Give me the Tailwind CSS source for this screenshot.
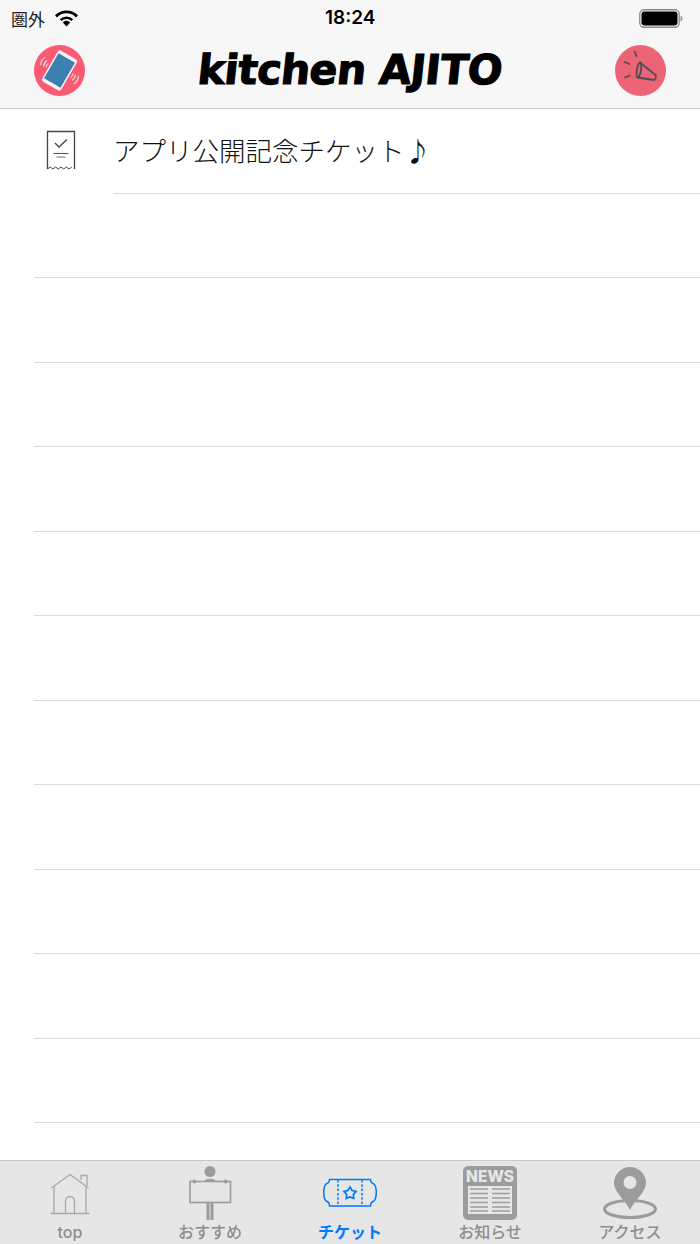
<!DOCTYPE html>
<html lang="ja">
<head>
<meta charset="utf-8">
<script src="https://cdn.jsdelivr.net/npm/@tailwindcss/browser@4"></script>
</head>
<body class="bg-white">
<div class="w-[700px] h-[1244px] flex flex-col overflow-hidden font-['Inter','Noto_Sans_CJK_JP',sans-serif] text-black">
  <header class="h-[109px] shrink-0 bg-[#f7f7f7] border-b border-[#cfcfcf] flex flex-col">
    <div class="h-[36px] shrink-0 relative flex items-center justify-between pl-[11px] pr-[17px]">
      <div class="flex items-center gap-[9px]">
        <span class="text-[17px] leading-none font-['Noto_Sans_CJK_JP',sans-serif] text-[#222]">圏外</span>
        <svg class="w-[25px] h-[18px]" viewBox="0 0 25 18"><path d="M12.5 17.5 L8.7 13.2 A5.5 5.5 0 0 1 16.3 13.2 Z" fill="#000"/><path d="M5.8 10.2 A9.7 9.7 0 0 1 19.2 10.2 L17.4 12 A7.2 7.2 0 0 0 7.6 12 Z" fill="#000"/><path d="M1 6.3 A16 16 0 0 1 24 6.3 L22 8.4 A13 13 0 0 0 3 8.4 Z" fill="#000"/></svg>
      </div>
      <span class="absolute left-[325px] top-[8px] text-[19px] leading-[20px] font-semibold">18:24</span>
      <svg class="w-[44px] h-[19px]" viewBox="0 0 44 19"><rect x="0.75" y="0.75" width="39.5" height="17.5" rx="4.5" fill="none" stroke="#8a8a8a" stroke-width="1.3"/><rect x="2.5" y="2.5" width="36" height="14" rx="3" fill="#000"/><path d="M41.5 6.5 C43 7 43.5 8 43.5 9.5 C43.5 11 43 12 41.5 12.5 Z" fill="#999"/></svg>
    </div>
    <nav class="flex-1 flex items-start justify-between pl-[34px] pr-[34px] pt-[9px]">
      <svg class="w-[51px] h-[51px]" viewBox="0 0 51 51">
        <circle cx="25.5" cy="25.5" r="25.5" fill="#fb5b72"/>
        <g transform="rotate(30 25.5 25.5)">
          <rect x="14.5" y="7.5" width="22" height="36" rx="3" fill="#f4f4f4"/>
          <rect x="16" y="11" width="19" height="29" fill="#3d7fb0"/>
        </g>
        <g fill="none" stroke="#f6d5d8" stroke-width="1.2">
          <path d="M6.5 20 A11 11 0 0 1 11 12"/><path d="M9.5 21.5 A8 8 0 0 1 13 15.5"/><path d="M12 22.5 A5 5 0 0 1 14.5 18.5"/>
          <path d="M44.5 31 A11 11 0 0 1 40 39"/><path d="M41.5 29.5 A8 8 0 0 1 38 35.5"/><path d="M39 28.5 A5 5 0 0 1 36.5 32.5"/>
        </g>
      </svg>
      <div class="w-[314px] h-[51px] flex items-center justify-center text-[41px] leading-none font-bold whitespace-nowrap font-['DejaVu_Sans',sans-serif] [-webkit-text-stroke:1.2px_black] tracking-[-0.5px] -skew-x-6">kitchen AJITO</div>
      <svg class="w-[51px] h-[51px]" viewBox="0 0 51 51">
        <circle cx="25.5" cy="25.5" r="25.5" fill="#ec6475"/>
        <g fill="none" stroke="#4f4f55" stroke-width="1.8" stroke-linecap="round" stroke-linejoin="round">
          <path d="M25 17.5 L40.5 30 C41.5 31 40.5 34.5 39 35 L22.5 32.5 C20.5 31.5 22 19 25 17.5 Z"/>
          <path d="M25 17.5 C27.5 19 26 31 22.5 32.5"/>
          <path d="M19.5 6.5 L21.5 11"/><path d="M9.5 17 L14.5 19"/><path d="M10 32.5 L14.5 30.5"/>
        </g>
      </svg>
    </nav>
  </header>

  <main class="flex-1 overflow-hidden">
    <div class="h-[84.5px] ml-[34px] relative flex items-start">
      <svg class="w-[30px] h-[42px] ml-[12px] mt-[21px] shrink-0" viewBox="0 0 30 42">
        <path d="M1.5 39 V1.5 H28.5 V39" fill="none" stroke="#444" stroke-width="1.3"/>
        <path d="M1.5 39 l2.7 -2 2.7 2 2.7 -2 2.7 2 2.7 -2 2.7 2 2.7 -2 2.7 2 2.7 -2" fill="none" stroke="#444" stroke-width="1"/>
        <path d="M9 13 L13 17 L21 9.5" fill="none" stroke="#444" stroke-width="1.3"/>
        <path d="M7.5 23.5 H22.5" stroke="#555" stroke-width="1.1"/><path d="M10.5 27 H19.5" stroke="#777" stroke-width="1.1"/>
      </svg>
      <div class="ml-[37px] flex-1 h-full border-b border-[#dcdcdc]">
        <p class="text-[26.5px] leading-[40px] mt-[21px] font-['Noto_Sans_CJK_JP',sans-serif] font-light text-[#111] whitespace-nowrap">アプリ公開記念チケット♪</p>
      </div>
    </div>
    <div class="h-[84.5px] ml-[34px] border-b border-[#dcdcdc]"></div>
    <div class="h-[84.5px] ml-[34px] border-b border-[#dcdcdc]"></div>
    <div class="h-[84.5px] ml-[34px] border-b border-[#dcdcdc]"></div>
    <div class="h-[84.5px] ml-[34px] border-b border-[#dcdcdc]"></div>
    <div class="h-[84.5px] ml-[34px] border-b border-[#dcdcdc]"></div>
    <div class="h-[84.5px] ml-[34px] border-b border-[#dcdcdc]"></div>
    <div class="h-[84.5px] ml-[34px] border-b border-[#dcdcdc]"></div>
    <div class="h-[84.5px] ml-[34px] border-b border-[#dcdcdc]"></div>
    <div class="h-[84.5px] ml-[34px] border-b border-[#dcdcdc]"></div>
    <div class="h-[84.5px] ml-[34px] border-b border-[#dcdcdc]"></div>
    <div class="h-[84.5px] ml-[34px] border-b border-[#dcdcdc]"></div>
  </main>

  <footer class="h-[84px] shrink-0 bg-[#e6e6e6] border-t border-[#c9c9c9] flex pt-[5px] text-[16px] font-medium text-[#8e8e8e] font-['Inter','Noto_Sans_CJK_JP',sans-serif]">
    <div class="flex-1 flex flex-col items-center">
      <svg class="w-[60px] h-[54px]" viewBox="0 0 60 54" fill="none" stroke="#a8a8a8" stroke-width="1.3">
        <path d="M11.5 22 L30 8.5 L48.5 22"/><path d="M41 14 V9.5 H47 V20"/><path d="M14 20 V47 M46 20 V47"/><path d="M10.5 47.5 H49.5"/><path d="M25.5 47 V35 A4.5 4.5 0 0 1 34.5 35 V47"/>
      </svg>
      <span class="leading-[22px] mt-[1px]">top</span>
    </div>
    <div class="flex-1 flex flex-col items-center">
      <svg class="w-[60px] h-[54px]" viewBox="0 0 60 54">
        <circle cx="30" cy="5.5" r="5.5" fill="#9c9c9c"/><path d="M24 16 C24 11.5 36 11.5 36 16 Z" fill="#9c9c9c"/>
        <rect x="26.5" y="37" width="3" height="17" fill="#9c9c9c"/><rect x="30.5" y="37" width="3" height="17" fill="#9c9c9c"/>
        <rect x="10" y="15.5" width="40.5" height="21" fill="#e6e6e6" stroke="#9c9c9c" stroke-width="1.6"/>
        <circle cx="14.5" cy="15.5" r="2" fill="#9c9c9c"/><circle cx="45.5" cy="15.5" r="2" fill="#9c9c9c"/>
      </svg>
      <span class="leading-[22px] mt-[1px]">おすすめ</span>
    </div>
    <div class="flex-1 flex flex-col items-center text-[#007aff] font-semibold">
      <svg class="w-[60px] h-[54px]" viewBox="0 0 60 54" fill="none" stroke="#007aff" stroke-width="1.5">
        <path d="M9.5 13.5 H50.5 C50.5 16.5 52.5 17.5 54 18 C57 21 57 32 54 35 C52.5 35.5 50.5 36.5 50.5 40 H9.5 C9.5 36.5 7.5 35.5 6 35 C3 32 3 21 6 18 C7.5 17.5 9.5 16.5 9.5 13.5 Z"/>
        <path d="M18 14 V40 M42 14 V40" stroke-dasharray="2.5 1.8"/>
        <path d="M30 21 L32.1 24.4 L36 25.4 L33.4 28.4 L33.7 32.4 L30 30.9 L26.3 32.4 L26.6 28.4 L24 25.4 L27.9 24.4 Z" stroke-width="1.7"/>
      </svg>
      <span class="leading-[22px] mt-[1px]">チケット</span>
    </div>
    <div class="flex-1 flex flex-col items-center">
      <svg class="w-[60px] h-[54px]" viewBox="0 0 60 54">
        <rect x="3" y="0" width="54" height="54" rx="5" fill="#9c9c9c"/>
        <rect x="8" y="20" width="44" height="28" fill="#e6e6e6"/>
        <path d="M10 23 H28 M10 27.5 H28 M10 32 H28 M10 36.5 H28 M10 41 H28 M10 45 H28 M32 23 H50 M32 27.5 H50 M32 32 H50 M32 36.5 H50 M32 41 H50 M32 45 H50" stroke="#9c9c9c" stroke-width="1.6"/>
        <text x="30" y="16" text-anchor="middle" font-family="Inter, sans-serif" font-weight="800" font-size="15.5" fill="#e6e6e6">NEWS</text>
      </svg>
      <span class="leading-[22px] mt-[1px]">お知らせ</span>
    </div>
    <div class="flex-1 flex flex-col items-center">
      <svg class="w-[60px] h-[54px]" viewBox="0 0 60 54">
        <ellipse cx="30" cy="43" rx="25.5" ry="8.5" fill="none" stroke="#9c9c9c" stroke-width="3"/>
        <path d="M30 44 C26 35 14 26 14 17 A16 16 0 0 1 46 17 C46 26 34 35 30 44 Z" fill="#9c9c9c" stroke="#e6e6e6" stroke-width="0"/>
        <circle cx="30" cy="16.5" r="6.5" fill="#e6e6e6"/>
      </svg>
      <span class="leading-[22px] mt-[1px]">アクセス</span>
    </div>
  </footer>
</div>
</body>
</html>
